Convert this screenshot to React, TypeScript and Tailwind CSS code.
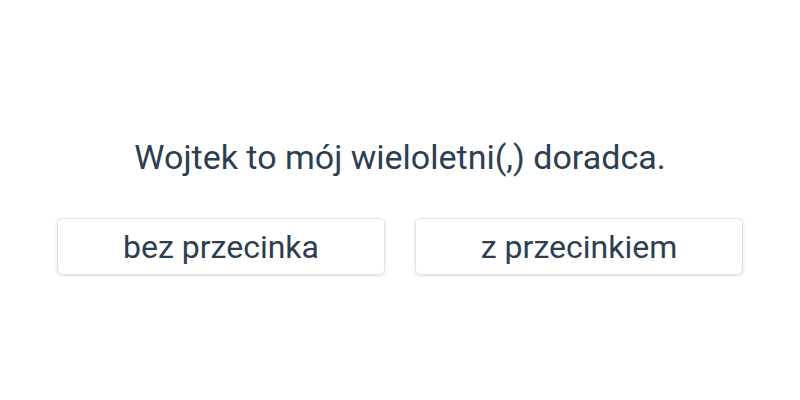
export default function App() {
  return (
    <div
      className="flex h-[400px] w-[800px] flex-col items-center bg-white pt-[137px] text-[#2c3e50]"
      style={{ fontFamily: "Roboto, 'Liberation Sans', sans-serif" }}
    >
      <p className="text-[34px] leading-[40px]">Wojtek to mój wieloletni(,) doradca.</p>
      <div className="mt-[41px] grid w-full grid-cols-2 gap-[30px] px-[57px]">
        {["bez przecinka", "z przecinkiem"].map(t => (
          <button
            key={t}
            className="h-[57px] rounded-[5px] border border-[#e3e3e3] bg-white text-[32px] text-[#2c3e50] shadow-[0_1px_3px_rgba(0,0,0,0.12)]"
          >
            {t}
          </button>
        ))}
      </div>
    </div>
  );
}
